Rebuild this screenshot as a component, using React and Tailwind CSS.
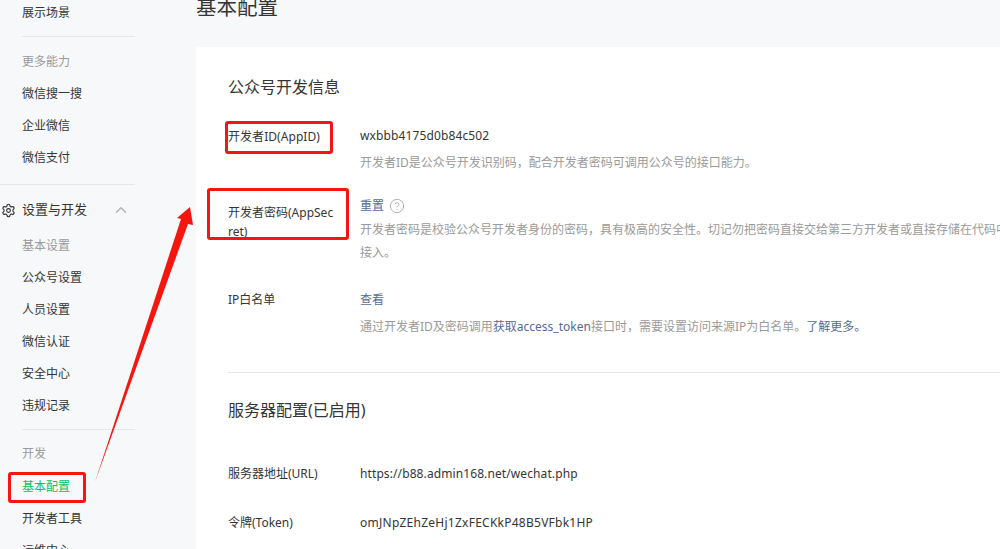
import React from "react";
import { Settings, ChevronUp, CircleHelp } from "lucide-react";

const FONT = "font-['Noto_Sans','Noto_Sans_CJK_SC',sans-serif]";

function Item({ children, muted, active }) {
  return (
    <div className={`h-8 leading-8 pl-[22px] text-[12px] ${muted ? "text-[#9a9a9a]" : active ? "text-[#07c160]" : "text-[#353535]"}`}>
      {children}
    </div>
  );
}

function Sidebar() {
  return (
    <aside className="w-[196px] shrink-0 mt-[-3px]">
      <Item>展示场景</Item>
      <div className="ml-[22px] w-[113px] h-px bg-[#e4e8eb] mt-[7px] mb-[9px]" />
      <Item muted>更多能力</Item>
      <Item>微信搜一搜</Item>
      <Item>企业微信</Item>
      <Item>微信支付</Item>
      <div className="w-[135px] h-px bg-[#e4e8eb] mt-[10px] mb-[9px]" />
      <div className="h-8 flex items-center w-[135px] text-[13px] text-[#353535]">
        <Settings className="w-[15px] h-[15px] ml-[1px] mr-[6px] text-[#333]" strokeWidth={1.8} />
        <span>设置与开发</span>
        <ChevronUp className="w-[18px] h-[18px] ml-[25px] text-[#b5b5b5]" strokeWidth={2} />
      </div>
      <div className="h-[4px]" />
      <Item muted>基本设置</Item>
      <Item>公众号设置</Item>
      <Item>人员设置</Item>
      <Item>微信认证</Item>
      <Item>安全中心</Item>
      <Item>违规记录</Item>
      <div className="ml-[22px] w-[113px] h-px bg-[#e4e8eb] mt-[7px] mb-[8px]" />
      <Item muted>开发</Item>
      <div className="h-px" />
      <Item active>基本配置</Item>
      <Item>开发者工具</Item>
      <Item>运维中心</Item>
    </aside>
  );
}

function Row({ label, labelClass = "", className = "", children }) {
  return (
    <div className={`flex ${className}`}>
      <div className={`w-[132px] shrink-0 pr-6 break-all text-[12px] text-[#353535] ${labelClass}`}>{label}</div>
      <div className="flex-1 min-w-0 text-[12px] text-[#353535] leading-6">{children}</div>
    </div>
  );
}

function Desc({ children, className = "" }) {
  return <div className={`text-[12px] text-[#9a9a9a] leading-[23.5px] w-[890px] ${className}`}>{children}</div>;
}

const link = "text-[#576b95]";

function Main() {
  return (
    <main className="flex-1 min-w-0 mt-[-8px]">
      <h1 className="h-[55px] leading-[30px] text-[20.5px] text-[#353535] font-normal whitespace-nowrap">基本配置</h1>
      <section className="bg-white w-[1100px] h-[520px] rounded-tl-[2px] px-8 pt-7">
        <h2 className="text-[16px] leading-6 font-normal text-[#353535] mb-[25px]">公众号开发信息</h2>
        <Row label="开发者ID(AppID)" labelClass="leading-6 pt-px tracking-[0.05px]">
          <div className="tracking-[0.12px]">wxbbb4175d0b84c502</div>
          <Desc className="mt-[3px]">开发者ID是公众号开发识别码，配合开发者密码可调用公众号的接口能力。</Desc>
        </Row>
        <Row label="开发者密码(AppSecret)" labelClass="leading-[19px] pt-[9px]" className="mt-[19px]">
          <div className="flex items-center">
            <span className={link}>重置</span>
            <CircleHelp className="ml-[5px] w-[16px] h-[16px] text-[#9f9f9f]" strokeWidth={1.2} />
          </div>
          <Desc>开发者密码是校验公众号开发者身份的密码，具有极高的安全性。切记勿把密码直接交给第三方开发者或直接存储在代码中。如需第三方代开发公众号，请使用授权方式接入。</Desc>
        </Row>
        <Row label="IP白名单" labelClass="leading-6" className="mt-[23px]">
          <div className={link}>查看</div>
          <Desc className="mt-[3px]">
            通过开发者ID及密码调用<span className={link}>获取access_token</span>接口时，需要设置访问来源IP为白名单。<span className={link}>了解更多。</span>
          </Desc>
        </Row>
        <div className="h-px bg-[#e7e7eb] mt-[34px] mb-[25px]" />
        <h2 className="text-[16px] leading-6 font-normal text-[#353535] mb-[40px]">服务器配置(已启用)</h2>
        <Row label="服务器地址(URL)" labelClass="leading-6">
          <div className="tracking-[0.1px]">https://b88.admin168.net/wechat.php</div>
        </Row>
        <Row label="令牌(Token)" labelClass="leading-6" className="mt-[25px]">
          <div className="tracking-[0.25px]">omJNpZEhZeHj1ZxFECKkP48B5VFbk1HP</div>
        </Row>
      </section>
    </main>
  );
}

function Box({ className }) {
  return <div className={`absolute border-[3px] border-[#f5170f] rounded-[3px] ${className}`} />;
}

export default function App() {
  return (
    <div className={`relative w-[1000px] h-[549px] overflow-hidden bg-[#f6f8f9] ${FONT}`}>
      <div className="flex">
        <Sidebar />
        <Main />
      </div>
      <Box className="left-[225px] top-[121px] w-[108px] h-[33px]" />
      <Box className="left-[207px] top-[188px] w-[142px] h-[52px]" />
      <Box className="left-[8px] top-[472px] w-[78px] h-[31px]" />
      <svg className="absolute left-0 top-0 pointer-events-none" width="1000" height="549">
        <polygon points="190,207 177,218 181,219 95,482 188,224 193,225" fill="#f5170f" />
      </svg>
    </div>
  );
}
